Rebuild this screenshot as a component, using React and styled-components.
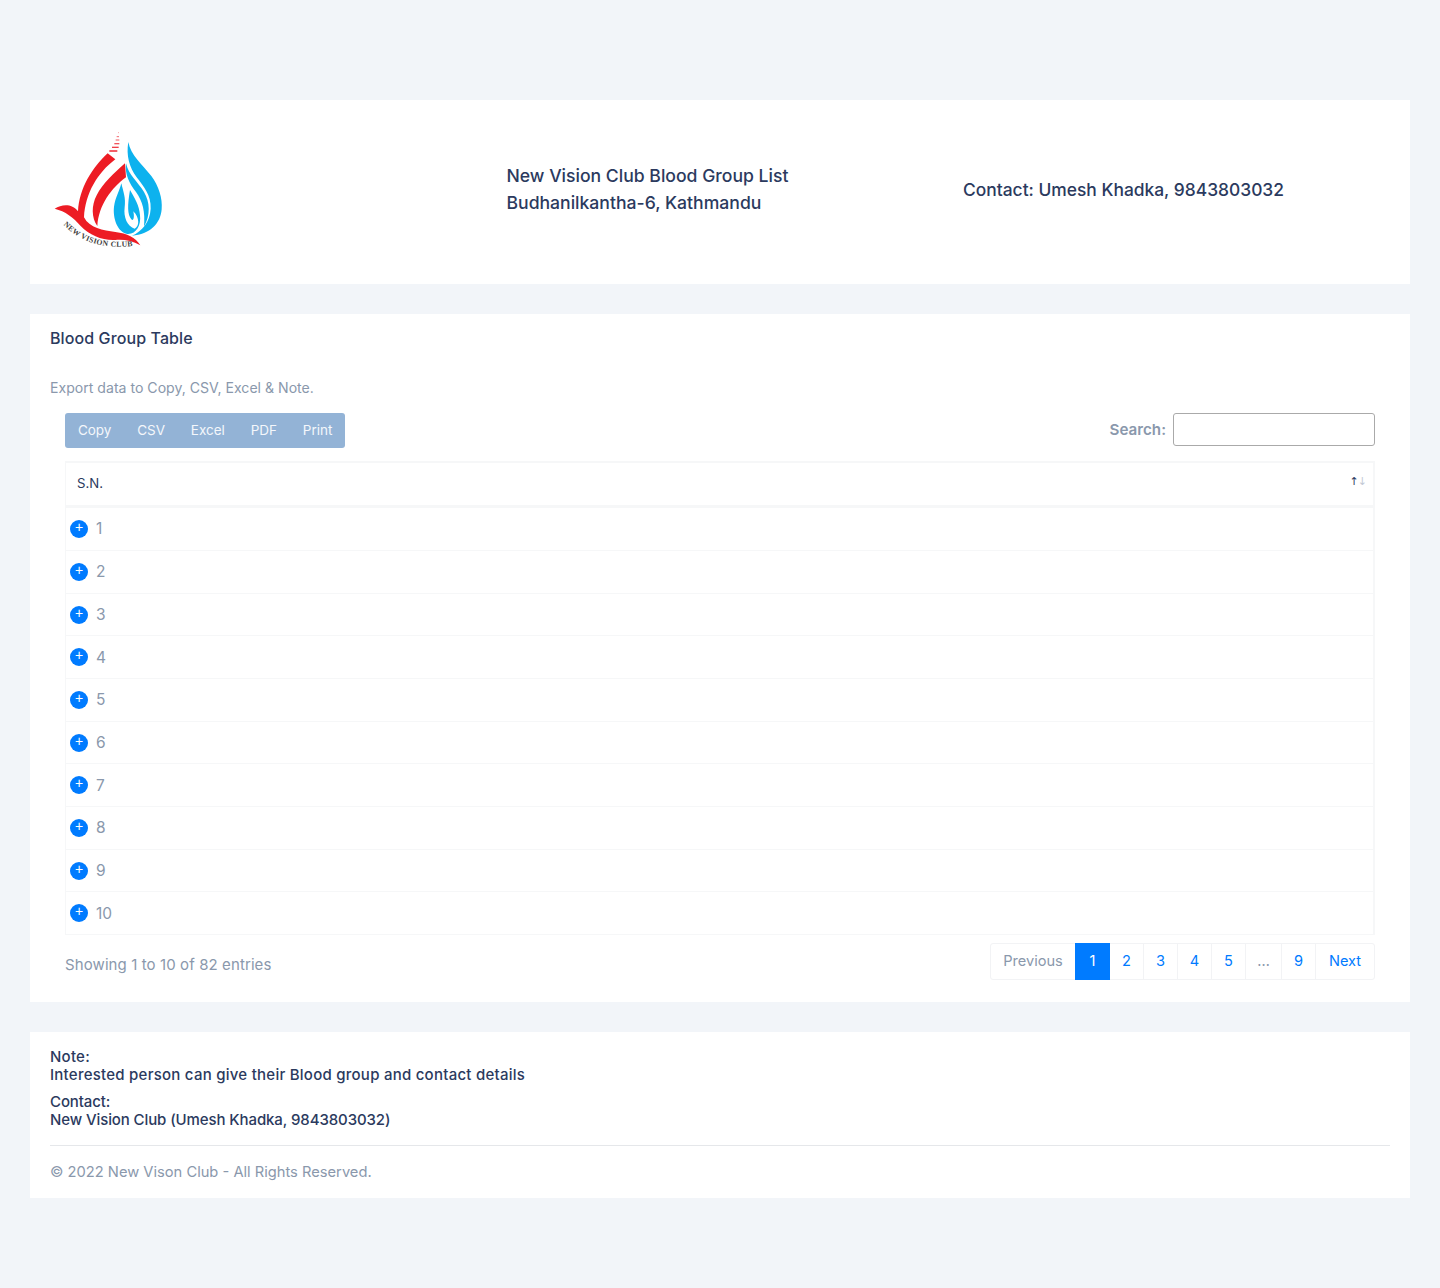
import React from 'react';
import styled, { createGlobalStyle } from 'styled-components';

const rows = [1, 2, 3, 4, 5, 6, 7, 8, 9, 10];
const exportButtons = ['Copy', 'CSV', 'Excel', 'PDF', 'Print'];
const pages = [
  { label: 'Previous', width: 84, muted: true },
  { label: '1', width: 35, active: true },
  { label: '2', width: 33 },
  { label: '3', width: 34, divider: true },
  { label: '4', width: 34, divider: true },
  { label: '5', width: 34, divider: true },
  { label: '…', width: 36, muted: true, divider: true },
  { label: '9', width: 34, divider: true },
  { label: 'Next', width: 59, divider: true },
];

const Logo = () => (
  <LogoSvg viewBox="0 0 420 420" aria-label="New Vision Club">
    <g stroke="#ee2a35" fill="none">
      <path d="M234 44h3" strokeWidth="2" opacity=".6" />
      <path d="M230 56h7" strokeWidth="3" opacity=".7" />
      <path d="M227 66h11" strokeWidth="3" opacity=".8" />
      <path d="M223 77h15" strokeWidth="4" opacity=".8" />
      <path d="M216 88h20" strokeWidth="4" opacity=".9" />
      <path d="M208 99h24" strokeWidth="5" opacity=".9" />
    </g>
    <path
      fill="#ed1c24"
      d="M44 272C66 258 96 256 114 280C118 210 156 150 203 106L226 124C172 165 136 226 132 298C148 330 190 338 226 342C262 346 286 358 301 382C276 368 252 364 226 366C186 368 150 352 122 324C100 298 76 280 44 272Z"
    />
    <path
      fill="#ed1c24"
      d="M255 136L258 178C214 210 176 262 172 324C154 300 154 262 170 232C188 196 224 164 255 136Z"
    />
    <path
      fill="#0db2ee"
      d="M265 72C272 112 306 138 334 174C356 204 368 240 365 274C362 316 330 350 276 353C306 340 330 312 332 272C334 232 310 204 290 178C268 148 258 112 265 72Z"
    />
    <path
      fill="#0db2ee"
      d="M258 136C266 172 294 192 312 222C330 252 332 292 312 326C316 280 308 250 288 222C268 196 254 170 258 136Z"
    />
    <path
      fill="#0db2ee"
      d="M244 196C250 222 258 240 254 268C250 298 262 326 284 332C298 326 300 300 280 280C284 300 280 310 274 304C262 290 262 262 270 216C284 240 298 262 300 292C304 322 288 350 262 348C232 342 218 300 222 266C226 238 238 220 244 196Z"
    />
    <defs>
      <path id="logo-arc" d="M70 320C110 360 170 396 278 384" />
    </defs>
    <LogoText textLength="226" lengthAdjust="spacing">
      <textPath href="#logo-arc">NEW VISION CLUB</textPath>
    </LogoText>
  </LogoSvg>
);

const App = () => (
  <>
    <GlobalStyle />
    <Page>
      <HeaderCard>
        <HeaderColumn>
          <Logo />
        </HeaderColumn>
        <HeaderColumn>
          <HeaderTitle>
            New Vision Club Blood Group List
            <br />
            Budhanilkantha-6, Kathmandu
          </HeaderTitle>
        </HeaderColumn>
        <HeaderColumn>
          <HeaderContact>Contact: Umesh Khadka, 9843803032</HeaderContact>
        </HeaderColumn>
      </HeaderCard>

      <TableCard>
        <CardTitle>Blood Group Table</CardTitle>
        <Subtitle>Export data to Copy, CSV, Excel &amp; Note.</Subtitle>
        <TableArea>
          <Toolbar>
            <ButtonGroup>
              {exportButtons.map((label) => (
                <ExportButton key={label}>{label}</ExportButton>
              ))}
            </ButtonGroup>
            <SearchLabel>
              Search:
              <SearchInput type="search" />
            </SearchLabel>
          </Toolbar>
          <Table>
            <HeadRow>
              S.N.
              <SortArrows>
                <span>↑</span>
                <SortDown>↓</SortDown>
              </SortArrows>
            </HeadRow>
            {rows.map((n) => (
              <Row key={n}>
                <Expand>+</Expand>
                {n}
              </Row>
            ))}
          </Table>
          <TableFooter>
            <Showing>Showing 1 to 10 of 82 entries</Showing>
            <Pagination>
              {pages.map((p) => (
                <PageItem
                  key={p.label}
                  $width={p.width}
                  $active={p.active}
                  $muted={p.muted}
                  $divider={p.divider}
                >
                  {p.label}
                </PageItem>
              ))}
            </Pagination>
          </TableFooter>
        </TableArea>
      </TableCard>

      <NoteCard>
        <NoteBlock $spacing={0.25}>
          Note:
          <br />
          Interested person can give their Blood group and contact details
        </NoteBlock>
        <NoteBlock $spacing={-0.1}>
          Contact:
          <br />
          New Vision Club (Umesh Khadka, 9843803032)
        </NoteBlock>
        <Rule />
        <Copyright>© 2022 New Vison Club - All Rights Reserved.</Copyright>
      </NoteCard>
    </Page>
  </>
);

const GlobalStyle = createGlobalStyle`
  body {
    margin: 0;
    background: #f2f5f9;
    font-family: Inter, "Noto Sans", sans-serif;
    color: #2b3a5e;
  }
`;

const Page = styled.div`
  display: flex;
  flex-direction: column;
  gap: 30px;
  padding: 100px 30px 90px;
`;

const Card = styled.section`
  background: #fff;
`;

const HeaderCard = styled(Card)`
  display: grid;
  grid-template-columns: repeat(3, 456.5px);
  height: 184px;
  padding-left: 20px;
  box-sizing: border-box;
  align-items: center;
`;

const HeaderColumn = styled.div`
  display: flex;
  align-items: center;
`;

const LogoSvg = styled.svg`
  width: 140px;
  height: 140px;
  margin-left: -10px;
  margin-top: -8px;
`;

const LogoText = styled.text`
  font-family: "Liberation Serif", serif;
  font-weight: 700;
  font-size: 23px;
  fill: #3f3f3f;
`;

const HeaderTitle = styled.div`
  font-size: 17.6px;
  font-weight: 500;
  line-height: 27px;
  margin-top: -7px;
`;

const HeaderContact = styled.div`
  font-size: 17.4px;
  font-weight: 500;
  margin-top: -6px;
`;

const TableCard = styled(Card)`
  height: 688px;
  padding: 14px 20px 0;
  box-sizing: border-box;
`;

const CardTitle = styled.h2`
  margin: 0;
  font-size: 16px;
  font-weight: 500;
  letter-spacing: 0.1px;
  line-height: 20px;
`;

const Subtitle = styled.p`
  margin: 30px 0 0;
  font-size: 14.1px;
  line-height: 20px;
  color: #8a98ac;
`;

const TableArea = styled.div`
  padding: 15px 15px 0;
`;

const Toolbar = styled.div`
  display: flex;
  justify-content: space-between;
  align-items: flex-start;
`;

const ButtonGroup = styled.div`
  display: flex;
  background: #93b3d6;
  border-radius: 3px;
  height: 35px;
`;

const ExportButton = styled.button`
  border: 0;
  background: none;
  padding: 0 12.9px 2px;
  font: inherit;
  font-size: 13.5px;
  color: #f4f7fb;
`;

const SearchLabel = styled.label`
  display: flex;
  align-items: center;
  gap: 7px;
  font-size: 15.2px;
  font-weight: 600;
  color: #8a98ac;
`;

const SearchInput = styled.input`
  width: 202px;
  height: 33px;
  box-sizing: border-box;
  border: 1px solid #aaa;
  border-radius: 3px;
  background: #fff;
`;

const Table = styled.div`
  margin-top: 13px;
  border: 2px solid #f6f7f8;
  border-bottom-width: 1px;
  border-right-width: 2px;
  border-left-width: 1px;
`;

const HeadRow = styled.div`
  position: relative;
  display: flex;
  align-items: center;
  height: 44.5px;
  box-sizing: border-box;
  padding: 0 0 2px 11px;
  font-size: 13.2px;
  border-bottom: 3px solid #f6f7f8;
`;

const SortArrows = styled.span`
  position: absolute;
  right: 7px;
  top: 11px;
  font-size: 11px;
  line-height: 16px;
  font-family: "DejaVu Sans", sans-serif;
  letter-spacing: -1px;
`;

const SortDown = styled.span`
  color: #c3cad5;
`;

const Row = styled.div`
  display: flex;
  align-items: center;
  gap: 8px;
  height: 42.67px;
  box-sizing: border-box;
  padding-left: 4px;
  font-size: 15.5px;
  color: #8a98ac;
  & + & {
    border-top: 1px solid #f6f7f8;
  }
`;

const Expand = styled.span`
  display: flex;
  justify-content: center;
  width: 18px;
  height: 18px;
  border-radius: 50%;
  background: #007bff;
  color: #fff;
  font-size: 14px;
  line-height: 14px;
  font-family: "Liberation Sans", sans-serif;
`;

const TableFooter = styled.div`
  display: flex;
  justify-content: space-between;
  align-items: flex-start;
  margin-top: 7.5px;
`;

const Showing = styled.div`
  margin-top: 10px;
  font-size: 15px;
  letter-spacing: 0.1px;
  line-height: 23px;
  color: #8a98ac;
`;

const Pagination = styled.div`
  display: flex;
  height: 37px;
  border: 1px solid #f2f3f5;
  border-radius: 3px;
  box-sizing: border-box;
`;

const PageItem = styled.div`
  display: flex;
  align-items: center;
  justify-content: center;
  width: ${(p) => p.$width}px;
  box-sizing: border-box;
  padding-bottom: 1px;
  font-size: 14.6px;
  color: ${(p) => (p.$active ? '#fff' : p.$muted ? '#8a98ac' : '#007bff')};
  background: ${(p) => (p.$active ? '#007bff' : 'transparent')};
  margin: ${(p) => (p.$active ? '-1px 0' : '0')};
  border-left: ${(p) => (p.$divider ? '1px solid #f2f3f5' : '0')};
`;

const NoteCard = styled(Card)`
  height: 166px;
  padding: 16px 20px 0;
  box-sizing: border-box;
`;

const NoteBlock = styled.div`
  font-size: 15px;
  font-weight: 500;
  letter-spacing: ${(p) => p.$spacing}px;
  line-height: 18px;
  margin-bottom: 9px;
`;

const Rule = styled.hr`
  margin: 16px 0 0;
  border: 0;
  border-top: 1px solid #e5e7ea;
`;

const Copyright = styled.div`
  margin-top: 15px;
  font-size: 14.7px;
  line-height: 22px;
  color: #8a98ac;
`;

export default App;
